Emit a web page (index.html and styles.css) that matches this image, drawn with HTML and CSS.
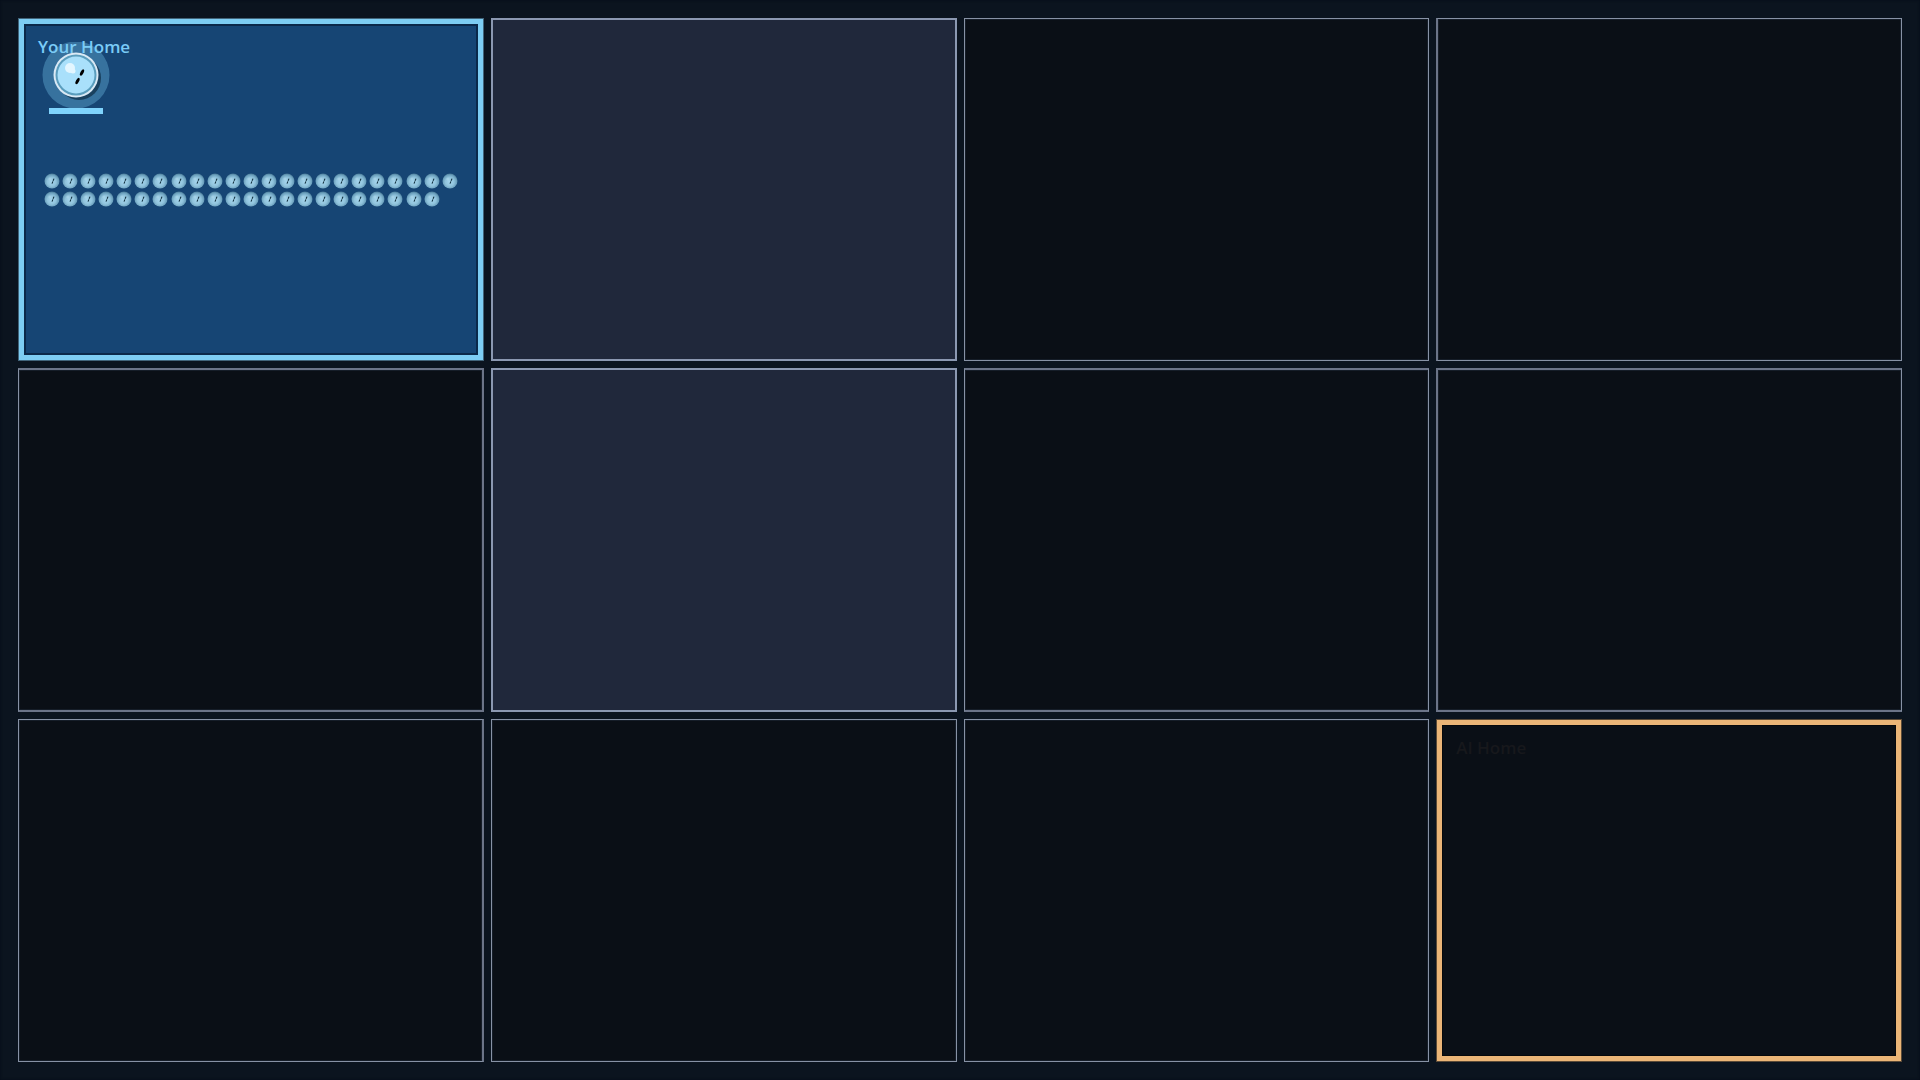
FILE: index.html
```html
<!DOCTYPE html>
<html lang="en">
<head>
<meta charset="utf-8">
<title>Board</title>
<link rel="stylesheet" href="styles.css">
</head>
<body>
<svg class="defs" width="0" height="0" aria-hidden="true">
  <defs>
    <radialGradient id="bead" cx=".48" cy=".56" r=".58"><stop offset="0" stop-color="#a6d6ee"/><stop offset=".5" stop-color="#90c3dc"/><stop offset=".8" stop-color="#6ba0bd"/><stop offset="1" stop-color="#3f6f8c"/></radialGradient>
    <symbol id="token" viewBox="0 0 16 16">
      <circle cx="8" cy="8" r="7.500" fill="url(#bead)"/>
      <circle cx="6" cy="6" r="1.6" fill="#b9dff0" opacity=".4"/>
      <path d="M10 5.600 9.100 7.800M8.900 8.400 8 10.600" stroke="#12303f" stroke-width="1.1"/>
    </symbol>
  </defs>
</svg>
<main class="board">
  <section class="cell home player">
    <h2 class="label">Your Home</h2>
    <svg class="unit" viewBox="0 0 68 80" aria-hidden="true">
      <circle cx="34" cy="33" r="33.500" fill="#7dcdf5" opacity=".33"/>
      <circle cx="37" cy="36" r="22" fill="#1a415f"/>
      <circle cx="34" cy="33" r="22.5" fill="#d9e9f5"/>
      <circle cx="34" cy="33" r="20.5" fill="#5a9dbd"/>
      <circle cx="34" cy="33" r="18.5" fill="#a9e0fb"/>
      <circle cx="28" cy="26" r="5" fill="#e3f6ff"/><circle cx="31" cy="29" r="2.5" fill="#e3f6ff"/>
      <ellipse cx="40" cy="30.500" rx="1.500" ry="3.500" transform="rotate(28 40 30.500)" fill="#000"/>
      <ellipse cx="35.500" cy="39" rx="1.500" ry="3.500" transform="rotate(28 35.500 39)" fill="#000"/>
      <rect x="7" y="66" width="54" height="6" fill="#7fd3fc"/>
    </svg>
    <div class="tokens"></div>
  </section>
  <section class="cell scouted"></section>
  <section class="cell"></section>
  <section class="cell last"></section>
  <section class="cell middle first"></section>
  <section class="cell scouted"></section>
  <section class="cell middle"></section>
  <section class="cell middle last"></section>
  <section class="cell first"></section>
  <section class="cell"></section>
  <section class="cell"></section>
  <section class="cell home rival"><h2 class="label">AI Home</h2></section>
</main>
<script src="board.js"></script>
</body>
</html>
```
FILE: styles.css
```css
* {
  box-sizing: border-box;
}

body {
  margin: 0;
  background: #0b141f;
  font-family: "Open Sans", sans-serif;
}

.defs {
  position: absolute;
}

.board {
  display: grid;
  grid-template-columns: repeat(4, 1fr);
  grid-template-rows: repeat(3, 1fr);
  gap: 7px;
  min-height: 100vh;
  padding: 18px;
  box-shadow: inset 0 0 3px #050d18;
}

.cell {
  position: relative;
  border: 1px solid #8792a5;
  background: #0a0f16;
  box-shadow: inset 0 0 0 1px #151d28;
}

.middle {
  border-top: 2px solid #6b7488;
  border-bottom: 2px solid #6b7488;
}

.first {
  border-right: 2px solid #6b7488;
}

.last {
  border-left: 2px solid #6b7488;
}

.scouted {
  border: 2px solid #8b98b1;
  background: #20283b;
  box-shadow: none;
}

.home {
  padding: 17px 19px;
}

.player {
  border-color: #41647a;
  background: #164574;
  box-shadow: inset 0 0 0 5px #7dcdf3, inset 0 0 0 7px #0b294a;
}

.rival {
  border-color: #5b4a37;
  box-shadow: inset 0 0 0 5px #ebb577, inset 0 0 0 6px #06080b;
}

.label {
  margin: 0;
  color: #7acbf7;
  font-size: 17px;
  font-weight: 600;
  line-height: 22px;
}

.rival .label {
  color: #17181c;
}

.unit {
  position: absolute;
  top: 23px;
  left: 23px;
  width: 68px;
  height: 80px;
}

.tokens {
  display: grid;
  grid-template-columns: repeat(23, 16px);
  justify-content: space-between;
  row-gap: 2px;
  margin: 115px 6px 0;
}

.token {
  width: 16px;
  height: 16px;
}
```
FILE: board.js
```js
const tokenCount = 45;
document.querySelector(".tokens").innerHTML =
  '<svg class="token" aria-hidden="true"><use href="#token"/></svg>'.repeat(tokenCount);
```
